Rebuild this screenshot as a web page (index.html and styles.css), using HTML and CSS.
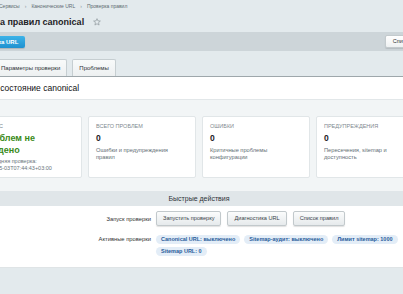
FILE: index.html
```html
<!DOCTYPE html>
<html lang="ru">
<head>
<meta charset="utf-8">
<title>Проверка правил canonical</title>
<link rel="stylesheet" href="styles.css">
</head>
<body>
<div class="page">
  <div class="crumbs">
    <span>Сервисы</span><span class="sep">›</span><span>Канонические URL</span><span class="sep">›</span><span>Проверка правил</span>
  </div>
  <h1 class="title">Проверка правил canonical
    <svg class="star" viewBox="0 0 10 10" width="8" height="8"><path d="M5 0.8 L6.2 3.6 L9.2 3.8 L6.9 5.8 L7.6 8.8 L5 7.2 L2.4 8.8 L3.1 5.8 L0.8 3.8 L3.8 3.6 Z" fill="none" stroke="#8f999e" stroke-width="0.9" stroke-linejoin="round"/></svg>
  </h1>
  <div class="toolbar">
    <button class="btn-blue">Диагностика URL</button>
    <button class="btn-white">Список правил</button>
  </div>
  <div class="tabs">
    <div class="tab">Параметры проверки</div>
    <div class="tab">Проблемы</div>
  </div>
  <div class="panel-head">Текущее состояние canonical</div>
  <div class="panel-body">
    <div class="cards">
      <div class="card">
        <div class="card-label">Статус</div>
        <div class="card-status">Проблем не найдено</div>
        <div class="card-meta">Последняя проверка:<br>2025-05-03T07:44:43+03:00</div>
      </div>
      <div class="card">
        <div class="card-label">Всего проблем</div>
        <div class="card-value">0</div>
        <div class="card-desc">Ошибки и предупреждения правил</div>
      </div>
      <div class="card">
        <div class="card-label">Ошибки</div>
        <div class="card-value">0</div>
        <div class="card-desc">Критичные проблемы конфигурации</div>
      </div>
      <div class="card">
        <div class="card-label">Предупреждения</div>
        <div class="card-value">0</div>
        <div class="card-desc">Пересечения, sitemap и доступность</div>
      </div>
    </div>
    <div class="quick">
      <div class="quick-head">Быстрые действия</div>
      <div class="quick-body">
        <div class="q-label">Запуск проверки</div>
        <div class="q-field q-buttons">
          <button class="btn">Запустить проверку</button>
          <button class="btn">Диагностика URL</button>
          <button class="btn">Список правил</button>
        </div>
        <div class="q-label q-label-top">Активные проверки</div>
        <div class="q-field q-badges">
          <span class="badge">Canonical URL: выключено</span>
          <span class="badge">Sitemap-аудит: выключено</span>
          <span class="badge">Лимит sitemap: 1000</span>
          <span class="badge">Sitemap URL: 0</span>
        </div>
      </div>
    </div>
  </div>
</div>
</body>
</html>
```
FILE: styles.css
```css
html, body {
  margin: 0;
  padding: 0;
}
body {
  background: #e3eaed;
  font-family: "Liberation Sans", Arial, sans-serif;
  overflow: hidden;
  width: 403px;
  height: 294px;
}
.page {
  margin-left: -46px;
  width: 490px;
}
.crumbs {
  display: flex;
  gap: 5px;
  padding: 3px 0 0 45px;
  height: 6px;
  line-height: 6px;
  font-size: 5px;
  color: #5e6a71;
}
.crumbs .sep {
  color: #8a959b;
}
.title {
  display: flex;
  align-items: center;
  gap: 9px;
  margin: 7px 0 0;
  padding-left: 8px;
  height: 12px;
  font-size: 9px;
  line-height: 12px;
  font-weight: bold;
  color: #1e2226;
}
.star {
  display: block;
}
.toolbar {
  display: flex;
  align-items: center;
  margin-top: 4px;
  height: 19px;
  padding: 0 5px 0 6px;
  background: #cdd5d9;
}
button {
  font-family: inherit;
  margin: 0;
}
.btn-blue {
  height: 12px;
  padding: 0 7px;
  border: none;
  border-radius: 2px;
  background: linear-gradient(#3db3e8, #1f91d0);
  color: #fff;
  font-size: 6px;
  font-weight: bold;
  line-height: 12px;
  box-shadow: 0 1px 1px rgba(0,0,0,0.15);
}
.btn-white {
  margin-left: auto;
  height: 13px;
  padding: 0 7px;
  border: 1px solid #c3cacd;
  border-radius: 2px;
  background: linear-gradient(#ffffff, #eef1f2);
  color: #333;
  font-size: 5.5px;
  line-height: 11px;
  box-shadow: 0 1px 1px rgba(0,0,0,0.12);
}
.tabs {
  display: flex;
  gap: 5px;
  margin-top: 8px;
  padding-left: 40px;
  border-bottom: 1px solid #9ea7ab;
}
.tab {
  height: 16px;
  line-height: 16px;
  padding: 0 6px;
  font-size: 6px;
  color: #2d3338;
  background: linear-gradient(#f8fafa, #edf0f1);
  border: 1px solid #c6ced1;
  border-bottom: none;
  border-radius: 2px 2px 0 0;
}
.panel-head {
  height: 22px;
  line-height: 22px;
  padding-left: 10px;
  background: #fff;
  font-size: 8.5px;
  color: #111;
  border-bottom: 1px solid #e2e7e9;
}
.panel-body {
  padding: 16px 20px 0;
  background: #f2f5f6;
}
.cards {
  display: grid;
  grid-template-columns: repeat(4, 1fr);
  gap: 6px;
}
.card {
  background: #fff;
  border: 1px solid #e1e6e8;
  border-radius: 2px;
  padding: 6px 7px 6px 7px;
  min-height: 48px;
}
.card-label {
  font-size: 5.5px;
  line-height: 6px;
  text-transform: uppercase;
  color: #7f8a90;
}
.card-value {
  margin-top: 4px;
  font-size: 8.5px;
  line-height: 10px;
  font-weight: bold;
  color: #1c2024;
}
.card-desc {
  margin-top: 3.5px;
  font-size: 5.7px;
  line-height: 7px;
  color: #636e74;
}
.card-status {
  margin-top: 4px;
  font-size: 9px;
  line-height: 11.7px;
  font-weight: bold;
  color: #3a8a18;
}
.card-meta {
  margin-top: 2px;
  font-size: 5.5px;
  line-height: 6.5px;
  color: #6a757b;
}
.quick {
  margin-top: 13px;
}
.quick-head {
  height: 15px;
  line-height: 15px;
  text-align: center;
  background: #e0e6e9;
  font-size: 7px;
  color: #2e3439;
}
.quick-body {
  display: grid;
  grid-template-columns: 40% 60%;
  row-gap: 8.5px;
  padding: 5px 0 11px;
  background: #fff;
  border-bottom: 1px solid #dfe4e6;
}
.q-label {
  align-self: center;
  padding-right: 3px;
  text-align: right;
  font-size: 5.8px;
  color: #333;
}
.q-label-top {
  align-self: start;
  line-height: 9px;
}
.q-field {
  padding-left: 2px;
}
.q-buttons {
  display: flex;
  gap: 6px;
}
.btn {
  height: 15px;
  padding: 0 6px;
  border: 1px solid #c2c9cc;
  border-radius: 2px;
  background: linear-gradient(#fbfcfc, #e6eaec);
  color: #3a444a;
  font-size: 5.6px;
  line-height: 13px;
  box-shadow: 0 1px 1px rgba(0,0,0,0.12);
}
.q-badges {
  display: flex;
  flex-wrap: wrap;
  gap: 3px 4px;
}
.badge {
  height: 9px;
  line-height: 9px;
  padding: 0 5px;
  border-radius: 4.5px;
  background: #e3edf7;
  color: #275b9a;
  font-size: 5.5px;
  font-weight: bold;
}
```
